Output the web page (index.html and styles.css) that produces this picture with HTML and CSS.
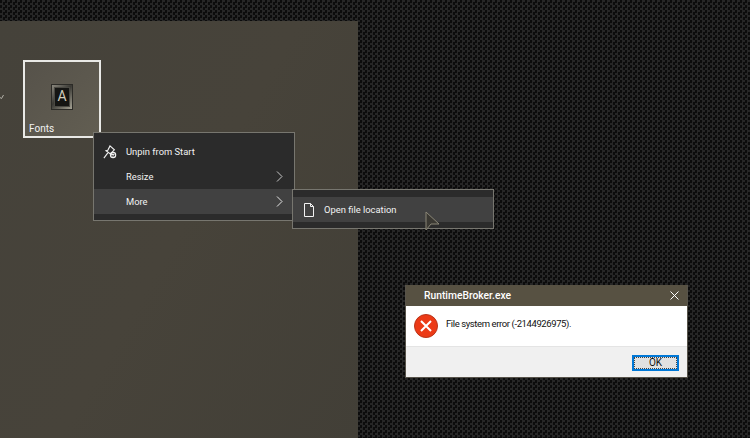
FILE: index.html
```html
<!DOCTYPE html>
<html>
  <head>
    <title>RuntimeBroker error</title>
    <link rel="stylesheet" href="styles.css">
  </head>
  <body>
    <div class="desktop">
      <div class="start-panel">
        <svg class="group-arrow" width="4" height="6" viewBox="0 0 4 6"><path d="M0 4.5 L1.5 5.5 L3.5 2" fill="none" stroke="#b5b3aa" stroke-width="1"/></svg>
        <div class="tile">
          <div class="tile-icon">
            <div class="tile-icon-inner"><span class="tile-letter">A</span></div>
          </div>
          <span class="tile-label">Fonts</span>
        </div>
      </div>

      <div class="menu main-menu">
        <div class="menu-item">
          <span class="menu-icon">
            <svg width="14" height="14" viewBox="0 0 16 16" fill="none" stroke="#f2f2f2" stroke-width="1.3">
              <path d="M8 1 L13 5.5 L9.5 9 L9.5 11 L3.5 6.5 L5.5 6 Z"/>
              <path d="M5.5 9 L1 15"/>
              <circle cx="11.5" cy="11.5" r="3"/>
              <path d="M10 10 L13 13 M13 10 L10 13"/>
            </svg>
          </span>
          <span class="menu-text">Unpin from Start</span>
        </div>
        <div class="menu-item">
          <span class="menu-icon"></span>
          <span class="menu-text">Resize</span>
          <svg class="chevron" width="7" height="11" viewBox="0 0 7 11"><path d="M1 0.5 L6 5.5 L1 10.5" fill="none" stroke="#c8c8c8"/></svg>
        </div>
        <div class="menu-item active">
          <span class="menu-icon"></span>
          <span class="menu-text">More</span>
          <svg class="chevron" width="7" height="11" viewBox="0 0 7 11"><path d="M1 0.5 L6 5.5 L1 10.5" fill="none" stroke="#e6e6e6"/></svg>
        </div>
      </div>

      <div class="menu sub-menu">
        <div class="menu-item active">
          <span class="menu-icon">
            <svg width="12" height="14" viewBox="0 0 12 14" fill="none" stroke="#f2f2f2" stroke-width="1">
              <path d="M1.5 0.5 H7.5 L10.5 3.5 V13.5 H1.5 Z"/>
              <path d="M7.5 0.5 V3.5 H10.5"/>
            </svg>
          </span>
          <span class="menu-text">Open file location</span>
        </div>
      </div>

      <svg class="cursor" width="16" height="21" viewBox="0 0 16 21">
        <path d="M1 1 L1 19 L6 13 L14 13 Z" fill="#3a3832" stroke="#8a8677" stroke-width="1"/>
      </svg>

      <div class="dialog">
        <div class="dialog-title">
          <span class="dialog-name">RuntimeBroker.exe</span>
          <svg class="dialog-close" width="9" height="9" viewBox="0 0 9 9"><path d="M0.5 0.5 L8.5 8.5 M8.5 0.5 L0.5 8.5" stroke="#fff" fill="none"/></svg>
        </div>
        <div class="dialog-body">
          <svg width="24" height="24" viewBox="0 0 24 24">
            <circle cx="12" cy="12" r="11.5" fill="#ec3a16" stroke="#b9341a" stroke-width="1"/>
            <path d="M7 7 L17 17 M17 7 L7 17" stroke="#fff" stroke-width="2" fill="none"/>
          </svg>
          <span class="dialog-text">File system error (-2144926975).</span>
        </div>
        <div class="dialog-footer">
          <button class="ok-button" type="button"><span class="ok-inner">OK</span></button>
        </div>
      </div>
    </div>
  </body>
</html>
```

FILE: styles.css
```css
html, body {
  margin: 0;
  padding: 0;
}

body {
  font-family: Roboto, "Noto Sans", Arial, sans-serif;
  background-color: #111;
}

.desktop {
  position: relative;
  width: 750px;
  height: 438px;
  overflow: hidden;
  background-color: #101010;
  background-image: conic-gradient(#262626 25%, #0c0c0c 25% 50%, #262626 50% 75%, #0c0c0c 75%);
  background-size: 5px 5px;
}

.start-panel {
  position: absolute;
  left: 0;
  top: 21px;
  width: 358px;
  height: 417px;
  background: linear-gradient(120deg, #45423a, #47433a 50%, #423f37);
}

.group-arrow {
  position: absolute;
  left: 0;
  top: 72px;
}

.tile {
  position: absolute;
  left: 23px;
  top: 39px;
  box-sizing: border-box;
  width: 78px;
  height: 78px;
  border: 2px solid #e9e9e6;
  background: linear-gradient(135deg, #56524a, #625e52);
  color: #f2f2f2;
  display: flex;
  flex-direction: column;
  align-items: center;
}

.tile-icon {
  box-sizing: border-box;
  width: 20px;
  height: 24px;
  margin-top: 23px;
  padding: 2px;
  background: linear-gradient(135deg, #8c897f, #3a3934 45%, #a5a294);
  outline: 1px solid #2c2b27;
}

.tile-icon-inner {
  box-sizing: border-box;
  height: 100%;
  background-color: #151513;
  border: 1px solid #4a4943;
  display: flex;
  justify-content: center;
  color: #cfcbbb;
}

.tile-letter {
  font-size: 14px;
  line-height: 16px;
}

.tile-label {
  align-self: flex-start;
  margin-top: 13px;
  margin-left: 4px;
  font-size: 10px;
  line-height: 13px;
}

.menu {
  position: absolute;
  box-sizing: border-box;
  width: 202px;
  padding: 7px 0;
  background-color: #2b2b2b;
  border: 1px solid #77766f;
  color: #f2f2f2;
}

.main-menu {
  left: 93px;
  top: 132px;
  height: 89px;
  padding-top: 6px;
}

.sub-menu {
  left: 292px;
  top: 189px;
  height: 40px;
}

.menu-item {
  height: 25px;
  display: flex;
  align-items: center;
  font-size: 9.4px;
}

.menu-item.active {
  background-color: #414141;
}

.menu-icon {
  width: 32px;
  flex: none;
  display: flex;
  justify-content: center;
  margin-top: 1px;
}

.sub-menu .menu-icon {
  width: 31px;
}

.menu-text {
  flex: 1;
}

.chevron {
  margin-right: 11px;
}

.cursor {
  position: absolute;
  left: 425px;
  top: 211px;
}

.dialog {
  position: absolute;
  left: 405px;
  top: 285px;
  box-sizing: border-box;
  width: 283px;
  height: 93px;
  display: flex;
  flex-direction: column;
  background-color: #fff;
  border: 1px solid #57534a;
  border-top: none;
}

.dialog-title {
  height: 21px;
  flex: none;
  display: flex;
  align-items: center;
  justify-content: space-between;
  padding: 0 8px 0 18px;
  background-color: #575142;
  color: #fff;
  font-size: 10.3px;
  font-weight: 500;
}

.dialog-body {
  height: 40px;
  flex: none;
  display: flex;
  align-items: center;
  gap: 8px;
  padding-left: 8px;
  background-color: #fff;
}

.dialog-text {
  font-size: 9.5px;
  letter-spacing: -0.4px;
  color: #111;
  margin-top: -6px;
}

.dialog-footer {
  flex: 1;
  display: flex;
  justify-content: flex-end;
  align-items: flex-start;
  padding: 8px 8px 0 0;
  background-color: #f0f0f0;
  border-top: 1px solid #e4e4e4;
}

.ok-button {
  box-sizing: border-box;
  width: 47px;
  height: 16px;
  padding: 0;
  border: 2px solid #0078d7;
  background-color: #e1e1e1;
  font-family: inherit;
  font-size: 10px;
  color: #111;
}

.ok-inner {
  box-sizing: border-box;
  display: block;
  height: 100%;
  line-height: 9px;
  border: 1px dotted #444;
}
```
